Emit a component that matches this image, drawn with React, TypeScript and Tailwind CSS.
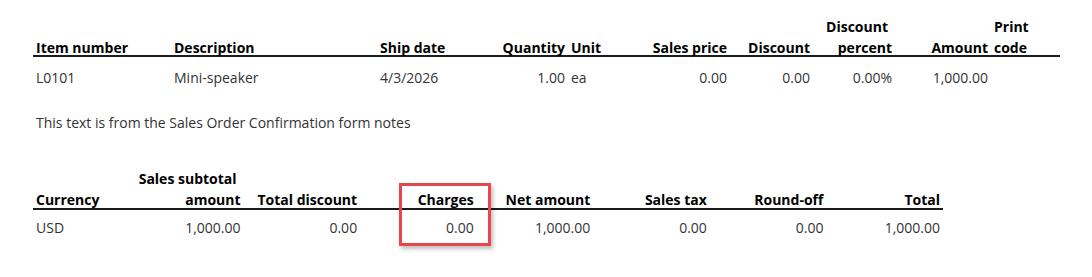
type Align = 'left' | 'right'

interface Col {
  head: string[]
  value: string
  align: Align
}

const LINE_COLS: Col[] = [
  { head: ['Item number'], value: 'L0101', align: 'left' },
  { head: ['Description'], value: 'Mini-speaker', align: 'left' },
  { head: ['Ship date'], value: '4/3/2026', align: 'left' },
  { head: ['Quantity'], value: '1.00', align: 'right' },
  { head: ['Unit'], value: 'ea', align: 'left' },
  { head: ['Sales price'], value: '0.00', align: 'right' },
  { head: ['Discount'], value: '0.00', align: 'right' },
  { head: ['Discount', 'percent'], value: '0.00%', align: 'right' },
  { head: ['Amount'], value: '1,000.00', align: 'right' },
  { head: ['Print', 'code'], value: '', align: 'left' },
]

const TOTAL_COLS: Col[] = [
  { head: ['Currency'], value: 'USD', align: 'left' },
  { head: ['Sales subtotal', 'amount'], value: '1,000.00', align: 'right' },
  { head: ['Total discount'], value: '0.00', align: 'right' },
  { head: ['Charges'], value: '0.00', align: 'right' },
  { head: ['Net amount'], value: '1,000.00', align: 'right' },
  { head: ['Sales tax'], value: '0.00', align: 'right' },
  { head: ['Round-off'], value: '0.00', align: 'right' },
  { head: ['Total'], value: '1,000.00', align: 'right' },
]

function HeadCell({ col }: { col: Col }) {
  const right = col.align === 'right'
  return (
    <div
      className={`flex flex-col justify-end whitespace-nowrap font-bold text-black ${
        right ? 'items-end pr-[3px] text-right' : 'items-start pl-[3px]'
      }`}
    >
      {col.head.map((line, i) => (
        <span
          key={line}
          className={right && col.head.length > 1 && i === 0 ? 'pr-[4px]' : ''}
        >
          {line}
        </span>
      ))}
    </div>
  )
}

function ValueCell({ col }: { col: Col }) {
  return (
    <div
      className={`whitespace-nowrap text-[#333] ${
        col.align === 'right' ? 'pr-[3px] text-right' : 'pl-[3px]'
      }`}
    >
      {col.value}
    </div>
  )
}

export default function App() {
  return (
    <div className="h-[277px] w-[1092px] overflow-hidden bg-white pl-[33px] pt-[16px] font-['Open_Sans',sans-serif] text-[14px] leading-[21px]">
      {/* ── Order lines ─────────────────────────────────────────────── */}
      <div className="w-[1027px]">
        <div className="grid grid-cols-[138px_206px_123px_68px_72px_90px_83px_82px_96px_69px]">
          {LINE_COLS.map((c) => (
            <HeadCell key={c.head.join(' ')} col={c} />
          ))}
        </div>
        <div className="-mt-[3px] h-[2px] bg-[#1c1c1c]" />
        <div className="grid grid-cols-[138px_206px_123px_68px_72px_90px_83px_82px_96px_69px] pt-[10px]">
          {LINE_COLS.map((c) => (
            <ValueCell key={c.head.join(' ')} col={c} />
          ))}
        </div>
      </div>

      {/* ── Form notes ──────────────────────────────────────────────── */}
      <p className="mt-[24px] pl-[3px] text-[#333]">
        This text is from the Sales Order Confirmation form notes
      </p>

      {/* ── Totals ──────────────────────────────────────────────────── */}
      <div className="relative mt-[35px] w-[910px]">
        <div className="grid grid-cols-[94px_repeat(7,1fr)]">
          {TOTAL_COLS.map((c) => (
            <HeadCell key={c.head.join(' ')} col={c} />
          ))}
        </div>
        <div className="-mt-[2px] h-[2px] bg-[#1c1c1c]" />
        <div className="grid grid-cols-[94px_repeat(7,1fr)] pt-[7px]">
          {TOTAL_COLS.map((c) => (
            <ValueCell key={c.head.join(' ')} col={c} />
          ))}
        </div>

        {/* highlight around the Charges column */}
        <div className="absolute left-[366px] top-[15px] h-[63px] w-[92px] border-[3px] border-[#e8454c] shadow-[2px_3px_4px_rgba(0,0,0,0.25)]" />
      </div>
    </div>
  )
}
